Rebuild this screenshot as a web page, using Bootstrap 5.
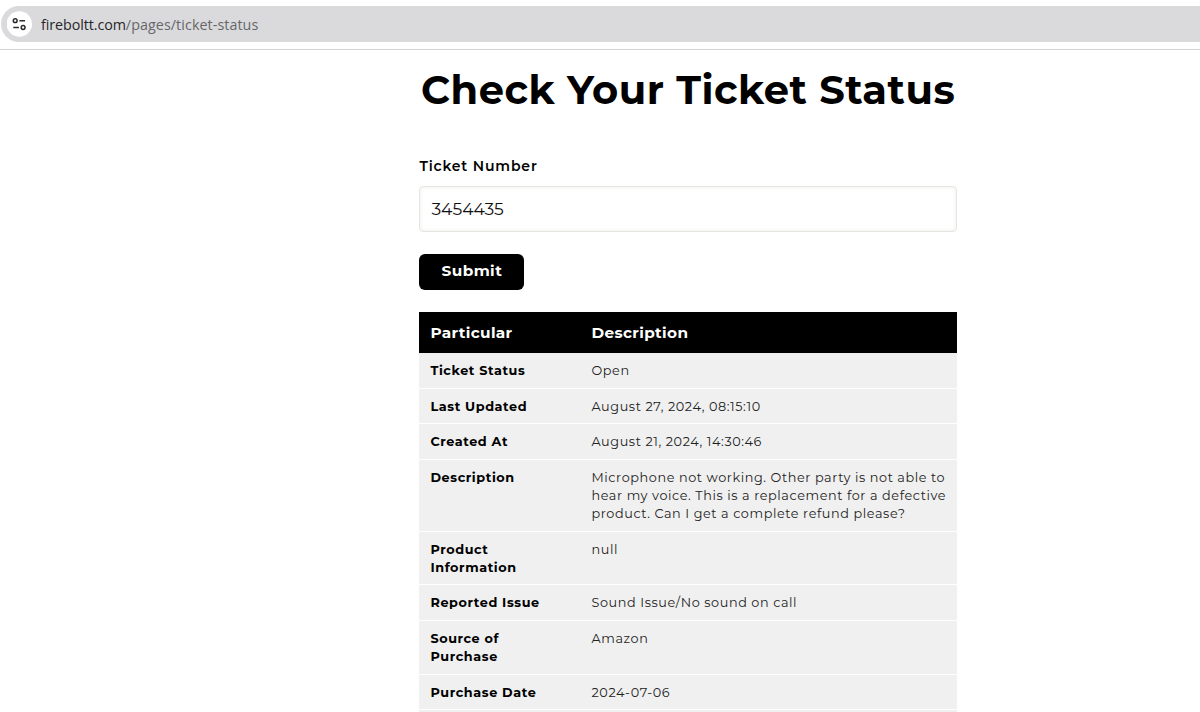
<!DOCTYPE html>
<html lang="en">
<head>
<meta charset="utf-8">
<meta name="viewport" content="width=device-width, initial-scale=1">
<title>Check Your Ticket Status</title>
<link href="https://cdn.jsdelivr.net/npm/bootstrap@5.3.0/dist/css/bootstrap.min.css" rel="stylesheet">
<style>
  body { font-family: Montserrat, Inter, sans-serif; color: #000; background: #fff; overflow: hidden; }
  .url-strip { height: 50px; padding-top: 6px; border-bottom: 1px solid #d2d3d5; }
  .url-field { height: 36px; background: #dadadc; border-radius: 18px 0 0 18px; padding-left: 6px; margin-left: 1px;
    font: 14.3px "Open Sans", "Noto Sans", sans-serif; color: #66676a; }
  .site-info { width: 26px; height: 26px; margin-right: 8px; }
  .url-host { color: #26272a; letter-spacing: -.08px; }
  .url-path { letter-spacing: .07px; }
  .ticket-page { width: 537.3px; margin-left: 419.4px; }
  .page-title { font-size: 40px; font-weight: 700; letter-spacing: .49px; line-height: 48px; margin: 16px 0 0; }
  .field-label { font-size: 14px; font-weight: 600; letter-spacing: .83px; line-height: 20px; margin: 42px 0 10px; display: block; }
  .ticket-input { height: 46px; font-size: 17.2px; letter-spacing: 0; color: #111; padding: 0 11px 2px; border: 1px solid #e6e6e0; border-radius: 4px; box-shadow: inset 0 0 4px rgba(0,0,0,.07); }
  .btn-submit { width: 105px; height: 36.5px; margin: 21.6px 0 21.9px; padding: 0; background: #000; color: #fff; border: 0; border-radius: 6px; font-size: 15.3px; font-weight: 700; letter-spacing: .43px; }
  .t-row { display: grid; grid-template-columns: 161.1px 1fr; padding: 0 10px 0 11px; }
  .t-head { height: 40.6px; align-items: center; background: #000; color: #fff; font-size: 15.3px; font-weight: 700; letter-spacing: .35px; padding-top: 2px; margin-bottom: .8px; }
  .t-item { background: #f0f0f0; border-bottom: 1px solid #fff; font-size: 12.8px; line-height: 18.27px; padding-top: 9px; padding-bottom: 7.2px; letter-spacing: .59px; color: #222; white-space: nowrap; }
  .t-item dt { font-weight: 700; letter-spacing: .6px; color: #000; }
  .t-item dd { margin: 0; }
</style>
<script src="https://cdn.jsdelivr.net/npm/bootstrap@5.3.0/dist/js/bootstrap.bundle.min.js"></script>
</head>
<body>
<header class="url-strip">
  <div class="url-field d-flex align-items-center">
    <svg class="site-info" viewBox="0 0 26 26" fill="none" stroke="#2b2c2f" stroke-width="1.5">
      <circle cx="12.3" cy="13" r="12.7" fill="#fff" stroke="none"/>
      <circle cx="8.2" cy="9.7" r="1.9"/><path d="M12.4 9.7h5.6M6.3 16.5h5.6"/><circle cx="16.1" cy="16.5" r="1.9"/>
    </svg>
    <span class="url-host">fireboltt.com</span><span class="url-path">/pages/ticket-status</span>
  </div>
</header>
<main class="ticket-page">
  <h1 class="page-title text-center text-nowrap">Check Your Ticket Status</h1>
  <form>
    <label class="field-label" for="ticket">Ticket Number</label>
    <input class="form-control ticket-input" id="ticket" type="text" value="3454435">
    <button class="btn btn-submit d-block" type="button">Submit</button>
  </form>
  <div class="t-row t-head"><span>Particular</span><span>Description</span></div>
  <dl class="mb-0">
    <div class="t-row t-item"><dt>Ticket Status</dt><dd>Open</dd></div>
    <div class="t-row t-item"><dt>Last Updated</dt><dd>August 27, 2024, 08:15:10</dd></div>
    <div class="t-row t-item"><dt>Created At</dt><dd>August 21, 2024, 14:30:46</dd></div>
    <div class="t-row t-item"><dt>Description</dt><dd>Microphone not working. Other party is not able to<br>hear my voice. This is a replacement for a defective<br>product. Can I get a complete refund please?</dd></div>
    <div class="t-row t-item"><dt>Product<br>Information</dt><dd>null</dd></div>
    <div class="t-row t-item"><dt>Reported Issue</dt><dd>Sound Issue/No sound on call</dd></div>
    <div class="t-row t-item"><dt>Source of<br>Purchase</dt><dd>Amazon</dd></div>
    <div class="t-row t-item"><dt>Purchase Date</dt><dd>2024-07-06</dd></div>
    <div class="t-row t-item"><dt>&nbsp;</dt><dd></dd></div>
  </dl>
</main>
</body>
</html>
